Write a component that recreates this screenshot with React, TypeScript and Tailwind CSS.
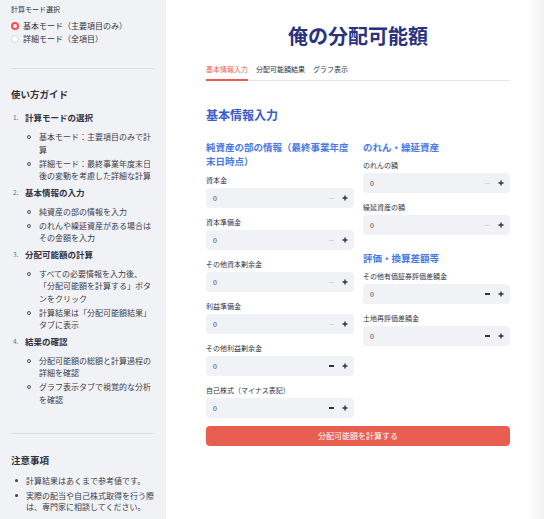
import React from "react";

type Head = { n: string; title: string; subs: string[][] };

const GUIDE: Head[] = [
    {
        n: "1.",
        title: "計算モードの選択",
        subs: [
            ["基本モード：主要項目のみで計", "算"],
            ["詳細モード：最終事業年度末日", "後の変動を考慮した詳細な計算"],
        ],
    },
    {
        n: "2.",
        title: "基本情報の入力",
        subs: [["純資産の部の情報を入力"], ["のれんや繰延資産がある場合は", "その金額を入力"]],
    },
    {
        n: "3.",
        title: "分配可能額の計算",
        subs: [
            ["すべての必要情報を入力後、", "「分配可能額を計算する」ボタ", "ンをクリック"],
            ["計算結果は「分配可能額結果」", "タブに表示"],
        ],
    },
    {
        n: "4.",
        title: "結果の確認",
        subs: [
            ["分配可能額の総額と計算過程の", "詳細を確認"],
            ["グラフ表示タブで視覚的な分析", "を確認"],
        ],
    },
];

const LEFT = [
    { label: "資本金", neg: false },
    { label: "資本準備金", neg: false },
    { label: "その他資本剰余金", neg: false },
    { label: "利益準備金", neg: false },
    { label: "その他利益剰余金", neg: true },
    { label: "自己株式（マイナス表記）", neg: true },
];

function NumberField({ label, neg, first }: { label: string; neg: boolean; first?: boolean }) {
    return (
        <div className={first ? "mt-[7px]" : "mt-[9px]"}>
            <div className="h-[10px] text-[7px] leading-[10px] text-[#31333f]">{label}</div>
            <div className="mt-[3px] flex h-[20px] items-center rounded-[4px] bg-[#f0f2f6] pl-[7px] pr-[6px]">
                <span className="flex-1 text-[7px] text-[#31333f]">0</span>
                <span className={neg ? "h-[1.5px] w-[5px] bg-[#31333f]" : "h-[1px] w-[5px] bg-[#d3d5da]"} />
                <svg className="ml-[8px]" width="6" height="6" viewBox="0 0 6 6">
                    <path d="M3 0.5v5M0.5 3h5" stroke="#31333f" strokeWidth="1.4" />
                </svg>
            </div>
        </div>
    );
}

export default function App() {
    return (
        <div className="flex h-[519px] w-[544px] overflow-hidden bg-white font-['Noto_Sans_CJK_JP',sans-serif] text-[#31333f]">
            {/* Sidebar */}
            <aside className="w-[166px] shrink-0 bg-[#f0f2f6] pl-[11px] pr-[12px] pt-[5px]">
                <div className="text-[7px] leading-[9px] text-[#31333f]">計算モード選択</div>
                <div className="mt-[5px] flex h-[13px] items-center gap-[4px] text-[8px]">
                    <span className="h-[8px] w-[8px] rounded-full border-[2.5px] border-[#ff4b4b] bg-white" />
                    基本モード（主要項目のみ）
                </div>
                <div className="flex h-[13px] items-center gap-[4px] text-[8px]">
                    <span className="h-[8px] w-[8px] rounded-full border border-[#d5d7dc] bg-white" />
                    詳細モード（全項目）
                </div>
                <div className="mt-[23px] border-t border-[#dcdee3]" />

                <div className="mt-[18px] text-[9.5px] font-bold leading-[14px]">使い方ガイド</div>
                <div className="mt-[10px]">
                    {GUIDE.map((h, i) => (
                        <div key={h.n} className={i > 0 ? "mt-[3px]" : ""}>
                            <div className="flex h-[12.5px] items-center leading-[12.5px]">
                                <span className="w-[14px] pl-[2px] text-[6.5px] text-[#6b6e78]">{h.n}</span>
                                <span className="text-[8.5px] font-bold">{h.title}</span>
                            </div>
                            <div className="mt-[7.5px] flex flex-col gap-[1.5px]">
                                {h.subs.map((lines, j) => (
                                    <div key={j} className="flex">
                                        <span className="flex h-[12.5px] w-[28px] items-center justify-end pr-[8px]">
                                            <span className="h-[4px] w-[4px] rounded-full border border-[#50525c]" />
                                        </span>
                                        <div className="text-[8px] leading-[12.5px] text-[#3d4049]">
                                            {lines.map((l) => (
                                                <div key={l} className="whitespace-nowrap">{l}</div>
                                            ))}
                                        </div>
                                    </div>
                                ))}
                            </div>
                        </div>
                    ))}
                </div>

                <div className="mt-[27px] border-t border-[#dcdee3]" />
                <div className="mt-[19px] text-[9.5px] font-bold leading-[14px]">注意事項</div>
                <div className="mt-[8px] flex flex-col gap-[3px] text-[8px] leading-[11.5px] text-[#3d4049]">
                    <div className="flex">
                        <span className="flex h-[11.5px] w-[15px] items-center pl-[4px]">
                            <span className="h-[3px] w-[3px] rounded-full bg-[#3d4049]" />
                        </span>
                        <span className="whitespace-nowrap">計算結果はあくまで参考値です。</span>
                    </div>
                    <div className="flex">
                        <span className="flex h-[11.5px] w-[15px] items-center pl-[4px]">
                            <span className="h-[3px] w-[3px] rounded-full bg-[#3d4049]" />
                        </span>
                        <div>
                            <div className="whitespace-nowrap">実際の配当や自己株式取得を行う際</div>
                            <div className="whitespace-nowrap">は、専門家に相談してください。</div>
                        </div>
                    </div>
                </div>
            </aside>

            {/* Main */}
            <main className="flex-1">
                <div className="ml-[40px] w-[304px] pt-[24px]">
                    <h1 className="text-center text-[20px] font-bold leading-[24px] text-[#29337f]">俺の分配可能額</h1>

                    <div className="mt-[17px] flex gap-[8px] border-b border-[#e6e7ea] text-[7px] leading-[9px]">
                        <span className="-mb-px border-b-2 border-[#ef5a4f] pb-[5px] text-[#ef5a4f]">基本情報入力</span>
                        <span className="pb-[5px] text-[#31333f]">分配可能額結果</span>
                        <span className="pb-[5px] text-[#31333f]">グラフ表示</span>
                    </div>

                    <h2 className="mt-[26px] text-[12px] font-bold leading-[16px] text-[#3a5ccc]">基本情報入力</h2>

                    <div className="mt-[17px] grid grid-cols-[148px_147px] gap-x-[9px]">
                        <div>
                            <h3 className="text-[9.5px] font-bold leading-[14px] text-[#4a79e4]">
                                純資産の部の情報（最終事業年度末日時点）
                            </h3>
                            {LEFT.map((f, i) => (
                                <NumberField key={f.label} label={f.label} neg={f.neg} first={i === 0} />
                            ))}
                        </div>
                        <div>
                            <h3 className="text-[9.5px] font-bold leading-[14px] text-[#4a79e4]">のれん・繰延資産</h3>
                            <div className="-mt-[1px]">
                                <NumberField label="のれんの額" neg={false} first />
                                <NumberField label="繰延資産の額" neg={false} />
                            </div>
                            <h3 className="mt-[16px] text-[9.5px] font-bold leading-[14px] text-[#4a79e4]">評価・換算差額等</h3>
                            <div className="-mt-[1px]">
                                <NumberField label="その他有価証券評価差額金" neg first />
                                <NumberField label="土地再評価差額金" neg />
                            </div>
                        </div>
                    </div>

                    <button className="mt-[8px] flex h-[20px] w-full items-center justify-center rounded-[4px] bg-[#e85f51] text-[8px] text-white">
                        分配可能額を計算する
                    </button>
                </div>
            </main>
            <div className="w-[16px] shrink-0 bg-gradient-to-r from-white to-[#f2f2f2]" />
        </div>
    );
}
